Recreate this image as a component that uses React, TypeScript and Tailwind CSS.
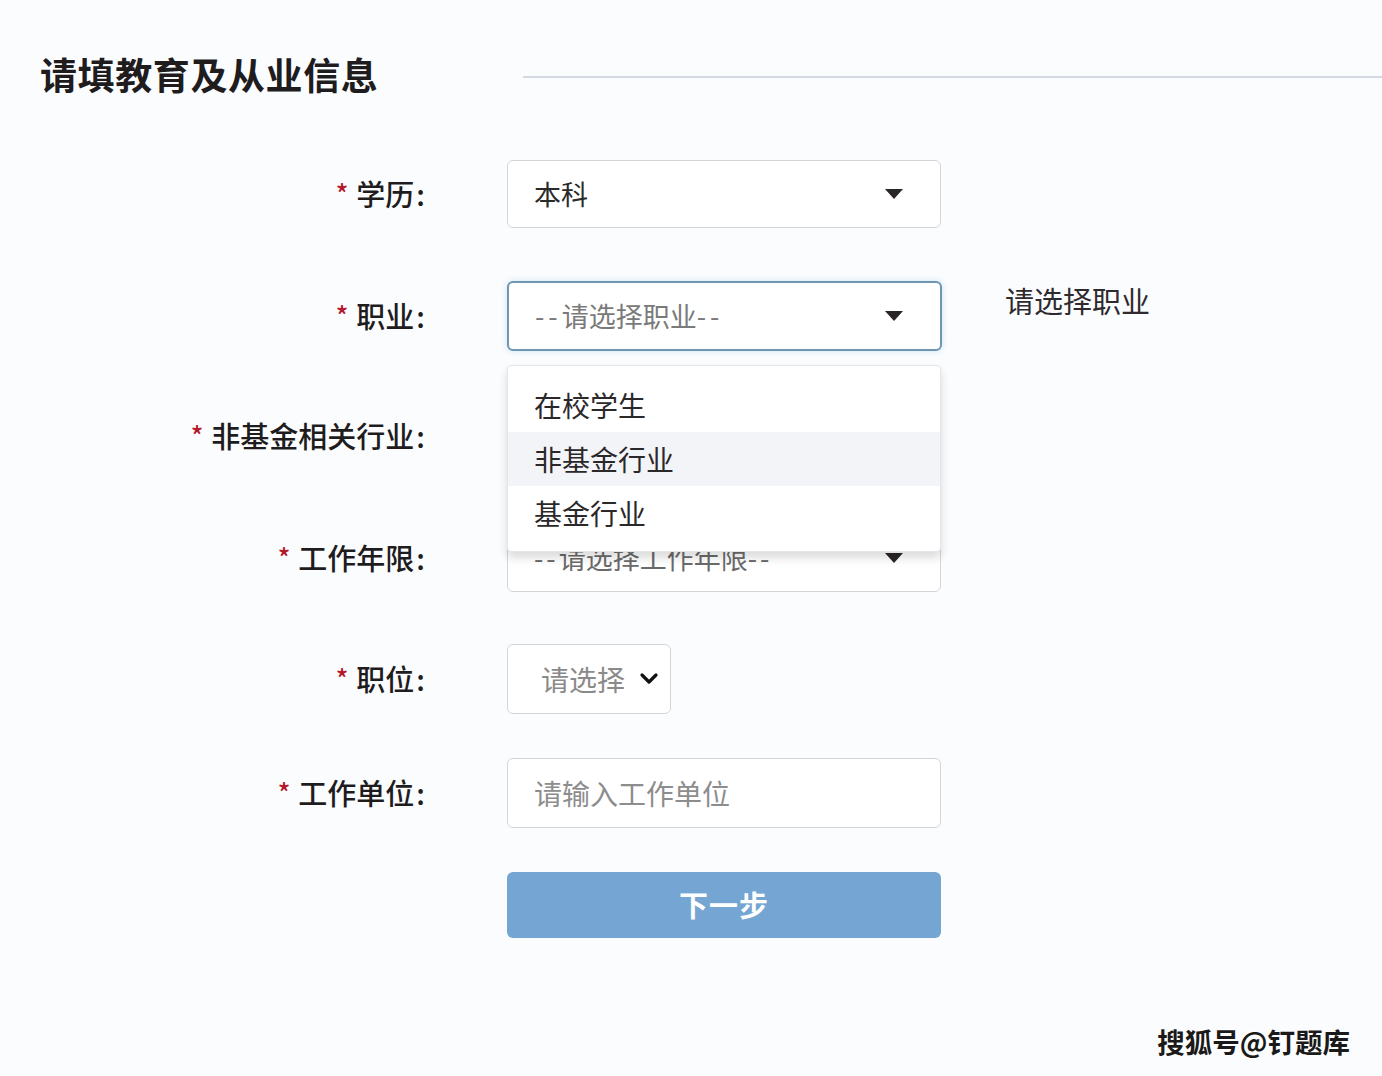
import type { ReactNode } from 'react';

const FONT = { fontFamily: '"Noto Sans CJK SC", "Noto Sans", sans-serif' };

function Caret() {
  return (
    <svg width="20" height="12" viewBox="0 0 20 12" className="shrink-0">
      <path d="M1 1 L19 1 L10 11 Z" fill="#2a2628" />
    </svg>
  );
}

function Chevron() {
  return (
    <svg width="20" height="14" viewBox="0 0 20 14" className="shrink-0">
      <path d="M3 3 L10 10 L17 3" fill="none" stroke="#111" strokeWidth="3.2" strokeLinecap="round" strokeLinejoin="round" />
    </svg>
  );
}

function Row({ label, children, className = '' }: { label: string; children: ReactNode; className?: string }) {
  return (
    <div className={`flex items-center ${className}`}>
      <div className="w-[425px] shrink-0 flex items-center justify-end text-[29px] font-medium text-[#1f1c1e]">
        <span className="text-[26px] text-[#b3192b] mr-[8px] mt-[-4px]">*</span>
        <span>{label}</span>
        <span className="ml-[2px]">:</span>
      </div>
      <div className="ml-[82px] relative">{children}</div>
    </div>
  );
}

export default function App() {
  return (
    <div className="min-h-[1076px] w-[1382px] bg-[#fbfcfe] relative overflow-hidden" style={FONT}>
      <div className="flex items-center pt-[50px]">
        <h1 className="pl-[40px] text-[37px] leading-[48px] font-bold text-[#201c1e] tracking-[0.6px]">请填教育及从业信息</h1>
        <div className="ml-[145px] flex-1 h-[2px] bg-[#d5d9e3] mt-[6px]" />
      </div>

      <div className="mt-[62px] flex flex-col">
        <Row label="学历">
          <div className="w-[434px] h-[68px] rounded-[6px] border border-[#d3d5da] bg-white flex items-center justify-between pl-[26px] pr-[36px] text-[27px] text-[#2a2a2a]">
            <span>本科</span>
            <Caret />
          </div>
        </Row>

        <Row label="职业" className="mt-[53px]">
          <div className="w-[435px] h-[70px] rounded-[6px] border-2 border-[#6f95b1] bg-white shadow-[0_0_6px_rgba(120,180,230,0.35)] flex items-center justify-between pl-[26px] pr-[36px] text-[27px] text-[#7a7a7a]">
            <span>
              <span className="tracking-[4px]">--</span>请选择职业<span className="tracking-[4px]">--</span>
            </span>
            <Caret />
          </div>
          <span className="absolute left-[498px] top-[-2px] whitespace-nowrap text-[29px] text-[#2e2a2d]">请选择职业</span>
          <div className="absolute left-0 top-[84px] z-10 w-[434px] h-[187px] rounded-[4px] bg-white border border-[#e3e5ea] shadow-[0_6px_10px_rgba(0,0,0,0.14)] py-[12px] text-[28px] text-[#2b282a]">
            <div className="h-[54px] flex items-center pl-[26px]">在校学生</div>
            <div className="h-[54px] flex items-center pl-[26px] bg-[#f3f4f8]">非基金行业</div>
            <div className="h-[54px] flex items-center pl-[26px]">基金行业</div>
          </div>
        </Row>

        <Row label="非基金相关行业" className="mt-[51px]">
          <div className="w-[434px] h-[68px] rounded-[6px] border border-[#d3d5da] bg-white flex items-center justify-end pr-[36px]">
            <Caret />
          </div>
        </Row>

        <Row label="工作年限" className="mt-[54px]">
          <div className="w-[434px] h-[68px] rounded-[6px] border border-[#d3d5da] bg-white flex items-center justify-between pl-[26px] pr-[36px] text-[27px] text-[#6a6a6a]">
            <span>
              <span className="tracking-[3px]">--</span>请选择工作年限<span className="tracking-[3px]">--</span>
            </span>
            <Caret />
          </div>
        </Row>

        <Row label="职位" className="mt-[52px]">
          <div className="w-[164px] h-[70px] rounded-[6px] border border-[#d3d5da] bg-white flex items-center pl-[33px] pr-[8px] gap-[14px] text-[28px] text-[#8a8a8a]">
            <span>请选择</span>
            <Chevron />
          </div>
        </Row>

        <Row label="工作单位" className="mt-[44px]">
          <div className="w-[434px] h-[70px] rounded-[6px] border border-[#d3d5da] bg-white flex items-center pl-[26px] text-[28px] text-[#8d8d8d]">
            请输入工作单位
          </div>
        </Row>

        <div className="mt-[44px] ml-[507px] w-[434px] h-[66px] rounded-[6px] bg-[#74a5d3] flex items-center justify-center text-[29px] font-bold text-white tracking-[1px]">
          下一步
        </div>
      </div>

      <div className="absolute right-[32px] bottom-[14px] text-[27.5px] font-bold text-[#1a1a1a] [text-shadow:2px_1px_0_#fff,-1px_-1px_0_#fff]">
        搜狐号@钉题库
      </div>
    </div>
  );
}
